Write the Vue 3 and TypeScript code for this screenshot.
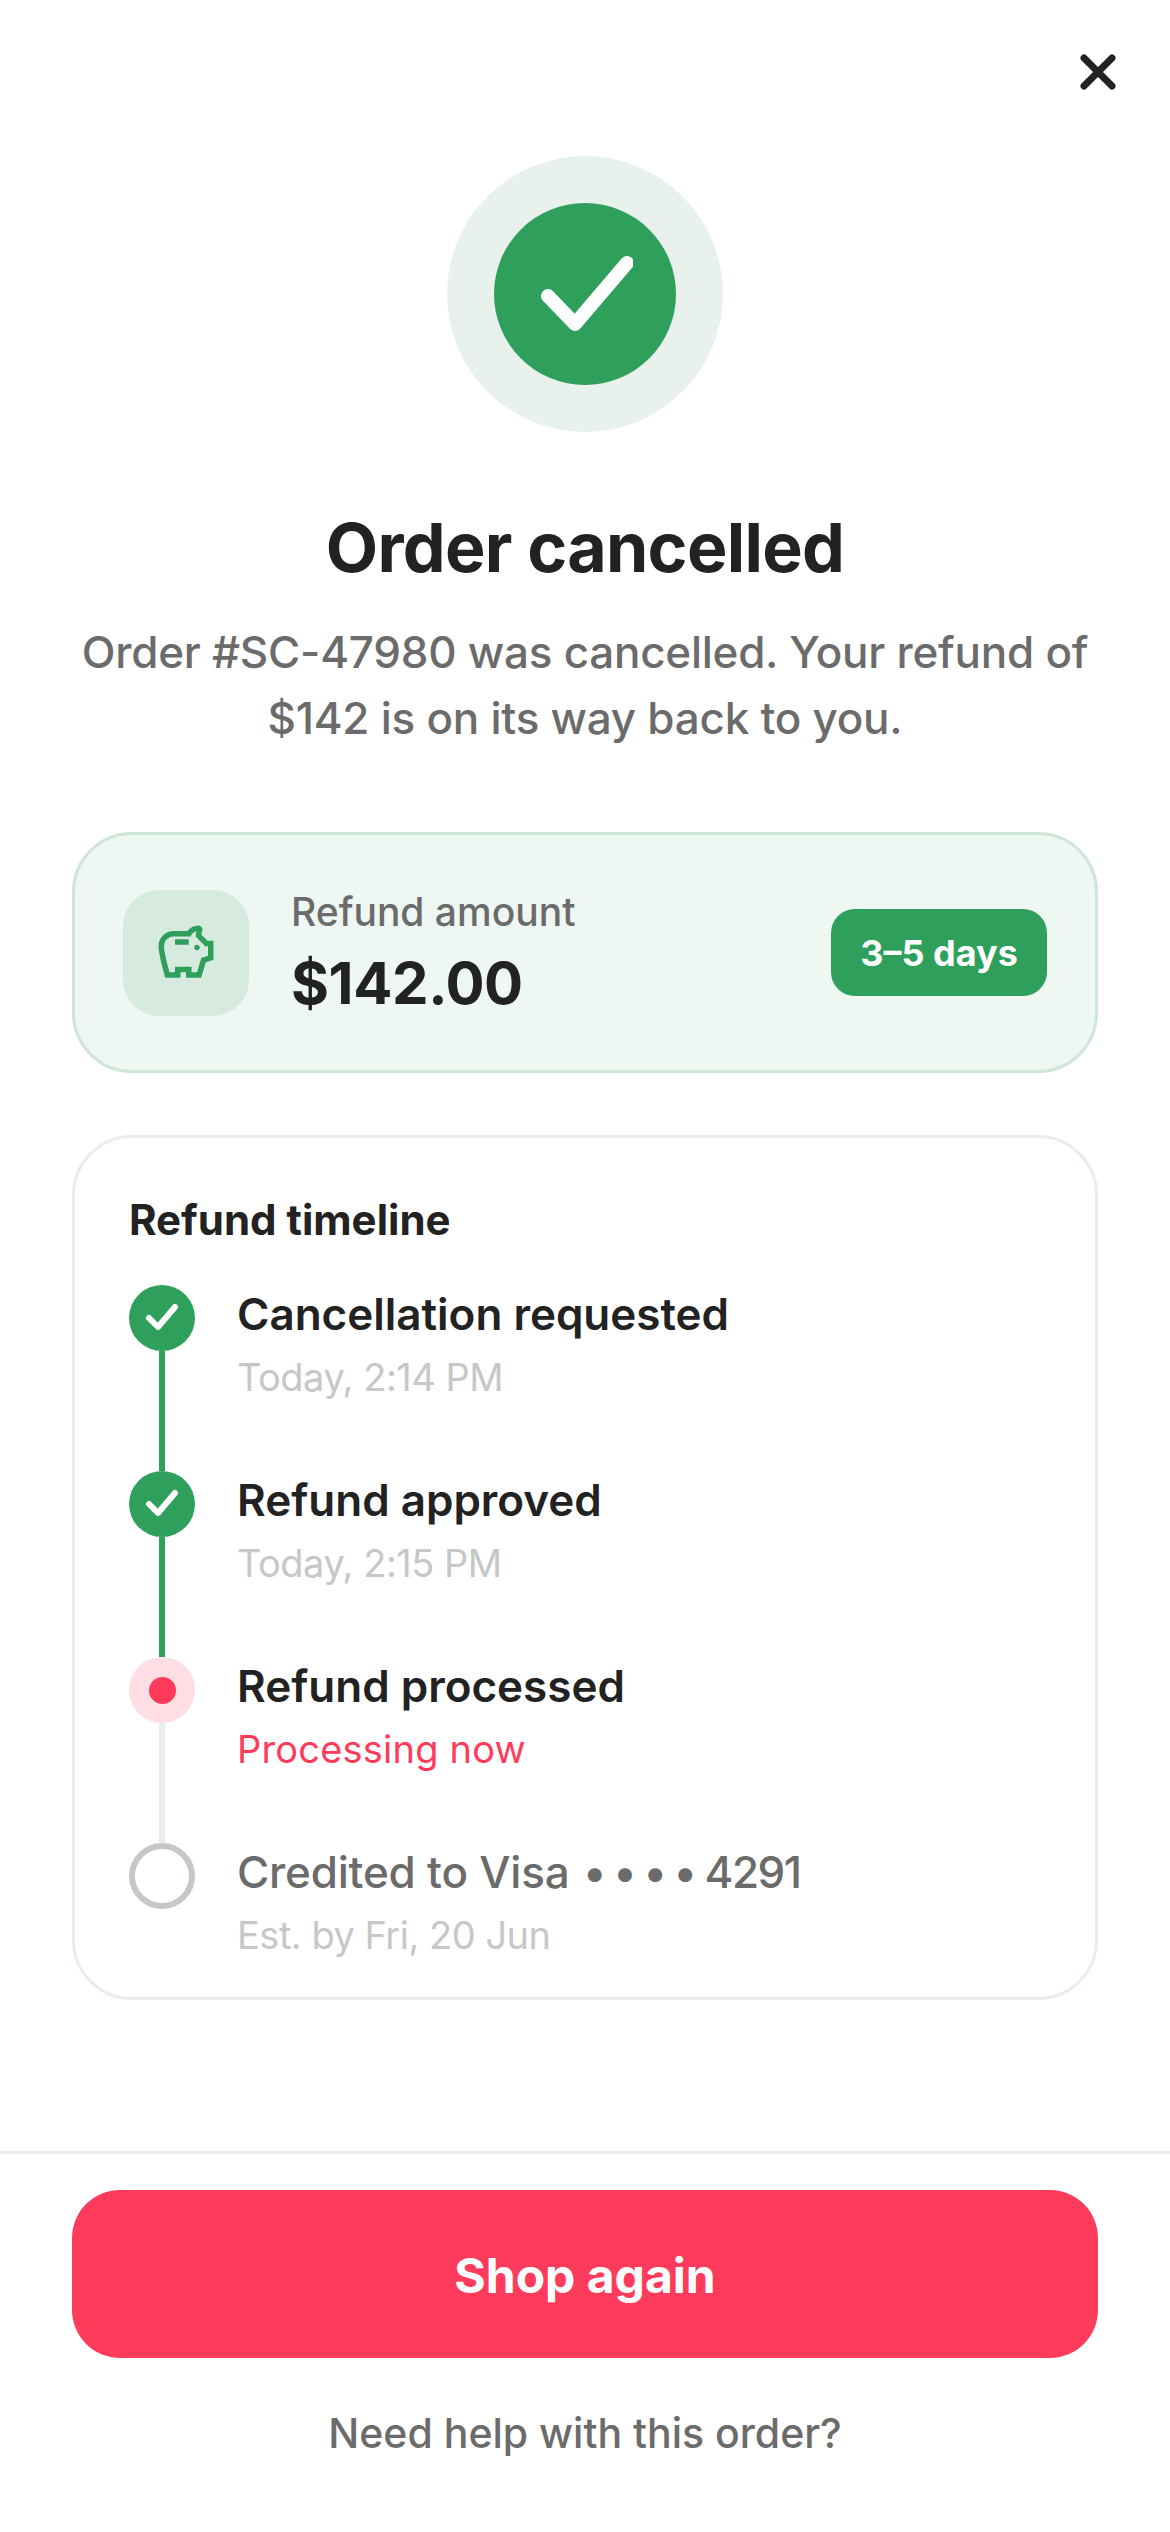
<script setup lang="ts">
interface Step {
  title: string
  mask?: string
  last4?: string
  sub: string
  state: 'done' | 'active' | 'pending'
}

const steps: Step[] = [
  { title: 'Cancellation requested', sub: 'Today, 2:14 PM', state: 'done' },
  { title: 'Refund approved', sub: 'Today, 2:15 PM', state: 'done' },
  { title: 'Refund processed', sub: 'Processing now', state: 'active' },
  { title: 'Credited to Visa', mask: '• • • •', last4: '4291', sub: 'Est. by Fri, 20 Jun', state: 'pending' },
]
</script>

<template>
  <div class="screen">
    <div class="top">
      <button class="close" aria-label="Close">
        <svg width="42" height="42" viewBox="0 0 42 42" fill="none" stroke="#222" stroke-width="7" stroke-linecap="round">
          <path d="M7 7l28 28M35 7L7 35" />
        </svg>
      </button>
    </div>

    <main class="content">
      <div class="hero-ring">
        <div class="hero-dot">
          <svg width="96" height="96" viewBox="0 0 96 96" fill="none" stroke="#fff" stroke-width="14" stroke-linecap="round" stroke-linejoin="round">
            <path d="M11 50l27 28 52-61" />
          </svg>
        </div>
      </div>

      <h1>Order cancelled</h1>
      <p class="lead">Order #SC-47980 was cancelled. Your refund of<br />$142 is on its way back to you.</p>

      <section class="refund">
        <div class="piggy">
          <svg width="66" height="66" viewBox="0 0 24 24" fill="#2ea05c">
            <path d="M15 10c0-.55.45-1 1-1s1 .45 1 1-.45 1-1 1-1-.45-1-1zM8 9h5V7H8v2zm14-1.5v6.97l-2.82.94L17.5 21H12v-2h-2v2H4.5S2 12.54 2 9.5 4.46 4 7.5 4h5c.91-1.21 2.36-2 4-2 .83 0 1.5.67 1.5 1.5 0 .21-.04.4-.12.58-.14.34-.26.73-.32 1.15L19.83 7.5H22zm-2 2h-1L15.5 6c0-.65.09-1.29.26-1.91-.97.25-1.76.97-2.09 1.91H7.5C5.57 6 4 7.57 4 9.5c0 1.88 1.22 6.65 2.01 9.5H8v-2h6v2h2.01l1.55-5.15L20 13.03V9.5z" />
          </svg>
        </div>
        <div class="refund-text">
          <div class="refund-label">Refund amount</div>
          <div class="refund-value">$142.00</div>
        </div>
        <div class="badge">3–5 days</div>
      </section>

      <section class="timeline">
        <h2>Refund timeline</h2>
        <div class="steps">
          <div v-for="(step, i) in steps" :key="step.title" class="step" :class="step.state">
            <div class="rail">
              <div class="dot">
                <svg v-if="step.state === 'done'" width="36" height="36" viewBox="0 0 36 36" fill="none" stroke="#fff" stroke-width="6" stroke-linecap="round" stroke-linejoin="round">
                  <path d="M5 18l9 9L31 7" />
                </svg>
                <span v-else-if="step.state === 'active'" class="pulse"></span>
              </div>
              <div v-if="i < steps.length - 1" class="line"></div>
            </div>
            <div class="step-text">
              <div class="step-title">
                {{ step.title }}
                <span v-if="step.mask" class="mask">{{ step.mask }}</span>
                <span v-if="step.last4" class="last4">{{ step.last4 }}</span>
              </div>
              <div class="step-sub">{{ step.sub }}</div>
            </div>
          </div>
        </div>
      </section>
    </main>

    <footer class="footer">
      <button class="cta">Shop again</button>
      <div class="help">Need help with this order?</div>
    </footer>
  </div>
</template>

<style scoped>
.screen {
  width: 1170px;
  height: 2532px;
  display: flex;
  flex-direction: column;
  background: #fff;
  font-family: Inter, 'Noto Sans', sans-serif;
  color: #222;
}

.top {
  display: flex;
  justify-content: flex-end;
  padding: 51px 51px 0 0;
}

.close {
  width: 42px;
  height: 42px;
  padding: 0;
  border: none;
  background: none;
}

.content {
  flex: 1;
  padding: 0 72px;
  display: flex;
  flex-direction: column;
  align-items: center;
}

.hero-ring {
  width: 276px;
  height: 276px;
  margin-top: 63px;
  border-radius: 50%;
  background: #e8f1ec;
  display: flex;
  align-items: center;
  justify-content: center;
}

.hero-dot {
  width: 182px;
  height: 182px;
  border-radius: 50%;
  background: #2ea05c;
  display: flex;
  align-items: center;
  justify-content: center;
}

h1 {
  margin: 73px 0 0;
  font-size: 68px;
  line-height: 84px;
  font-weight: 700;
  letter-spacing: -0.7px;
}

.lead {
  margin: 30px 0 0;
  font-size: 44px;
  line-height: 66px;
  font-weight: 500;
  letter-spacing: -0.25px;
  color: #6b6b6b;
  text-align: center;
}

.refund {
  width: 100%;
  box-sizing: border-box;
  height: 241px;
  margin-top: 81px;
  padding: 0 48px;
  display: flex;
  align-items: center;
  background: #eef7f2;
  border: 3px solid #cde6d8;
  border-radius: 60px;
}

.piggy {
  width: 126px;
  height: 126px;
  border-radius: 36px;
  background: #d7eadf;
  display: flex;
  align-items: center;
  justify-content: center;
}

.refund-text {
  flex: 1;
  margin-left: 42px;
}

.refund-label {
  margin-top: -2px;
  font-size: 39px;
  line-height: 54px;
  font-weight: 500;
  color: #6b6b6b;
}

.refund-value {
  margin-top: 8px;
  font-size: 58px;
  line-height: 72px;
  font-weight: 700;
  letter-spacing: -0.4px;
}

.badge {
  width: 216px;
  height: 87px;
  border-radius: 24px;
  background: #2ea05c;
  color: #fff;
  font-size: 36px;
  font-weight: 700;
  display: flex;
  align-items: center;
  justify-content: center;
}

.timeline {
  width: 100%;
  box-sizing: border-box;
  height: 865px;
  margin-top: 62px;
  padding: 58px 54px 0;
  border: 3px solid #e8eeeb;
  border-radius: 60px;
}

h2 {
  margin: 0 0 41px;
  font-size: 42px;
  line-height: 48px;
  font-weight: 700;
}

.step {
  display: flex;
  height: 186px;
}

.step:last-child {
  height: auto;
}

.rail {
  width: 66px;
  display: flex;
  flex-direction: column;
  align-items: center;
}

.dot {
  width: 66px;
  height: 66px;
  box-sizing: border-box;
  flex: none;
  border-radius: 50%;
  display: flex;
  align-items: center;
  justify-content: center;
}

.line {
  width: 6px;
  flex: 1;
  background: #2ea05c;
}

.done .dot {
  background: #2ea05c;
}

.active .dot {
  background: #ffdde4;
}

.active .line {
  background: #e8eeeb;
}

.pending .dot {
  border: 6px solid #c4c8c6;
}

.pulse {
  width: 27px;
  height: 27px;
  border-radius: 50%;
  background: #ff3b5c;
}

.step-text {
  margin-left: 42px;
  margin-top: -1px;
}

.step-title {
  font-size: 44px;
  line-height: 60px;
  font-weight: 600;
}

.step-sub {
  margin-top: 6px;
  font-size: 38px;
  line-height: 54px;
  letter-spacing: -0.5px;
  color: #c4c8c6;
}

.active .step-sub {
  letter-spacing: 0.2px;
  color: #ff3b5c;
}

.pending .step-title {
  font-weight: 500;
  letter-spacing: -0.2px;
  color: #6b6b6b;
}

.mask {
  margin-left: 2px;
  word-spacing: -4px;
  letter-spacing: -0.5px;
}

.last4 {
  margin-left: 8px;
  letter-spacing: -1.5px;
}

.footer {
  height: 381px;
  box-sizing: border-box;
  padding: 36px 72px 0;
  border-top: 3px solid #e8eeeb;
  text-align: center;
}

.cta {
  display: block;
  width: 100%;
  height: 168px;
  padding: 3px 0 0;
  border: none;
  border-radius: 48px;
  background: #ff3b5c;
  color: #fff;
  font-family: inherit;
  font-size: 48px;
  font-weight: 700;
}

.help {
  margin-top: 48px;
  font-size: 41px;
  line-height: 54px;
  font-weight: 500;
  color: #6b6b6b;
}
</style>
